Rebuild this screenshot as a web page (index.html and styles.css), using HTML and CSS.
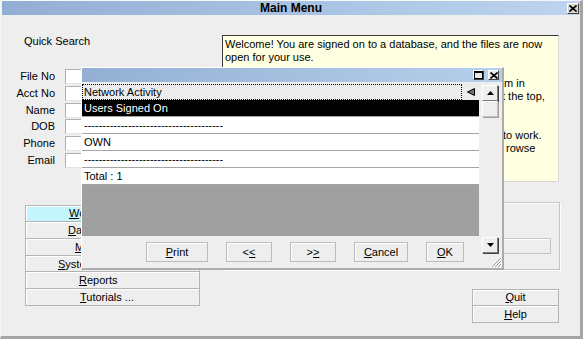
FILE: index.html
```html
<!DOCTYPE html>
<html>
<head>
<meta charset="utf-8">
<title>Main Menu</title>
<link rel="stylesheet" href="styles.css">
</head>
<body>
<div class="window">
  <div class="titlebar">
    <span class="title">Main Menu</span>
    <span class="tclose"><svg width="8" height="7" viewBox="0 0 8 7"><path d="M0.5 0.5 L7.5 6.5 M7.5 0.5 L0.5 6.5" stroke="#000" stroke-width="1.6" fill="none"/></svg></span>
  </div>
  <div class="body">
    <div class="left">
      <div class="qs">Quick Search</div>
      <div class="form">
        <span class="lbl">File No</span><span class="inp"></span>
        <span class="lbl">Acct No</span><span class="inp"></span>
        <span class="lbl">Name</span><span class="inp"></span>
        <span class="lbl">DOB</span><span class="inp"></span>
        <span class="lbl">Phone</span><span class="inp"></span>
        <span class="lbl">Email</span><span class="inp"></span>
      </div>
      <div class="nav">
        <div class="nbtn active i-w"><u>W</u>ork Area</div>
        <div class="nbtn i-d"><u>D</u>ata Entry</div>
        <div class="nbtn i-m"><u>M</u>aintenance</div>
        <div class="nbtn i-s"><u>S</u>ystem Utilities</div>
        <div class="nbtn i-r"><u>R</u>eports</div>
        <div class="nbtn i-t"><u>T</u>utorials ...</div>
      </div>
    </div>
    <div class="right">
      <div class="info">
        <div class="ln">Welcome! You are signed on to a database, and the files are now</div>
        <div class="ln">open for your use.</div>
        <div class="ln"></div>
        <div class="ln"><span class="lead l4">To get started, pick a program from the menu, or open a for</span>m in</div>
        <div class="ln"><span class="lead l5">the list. Your signon name is shown in the title bar a</span>t the top,</div>
        <div class="ln">along with the current database.</div>
        <div class="ln"></div>
        <div class="ln"><span class="lead l8">Use the buttons on the left to choose where you want </span>to work.</div>
        <div class="ln"><span class="lead l9">You can also use Quick Search to find a record or b</span>rowse</div>
      </div>
      <div class="group"><div class="gfield"></div></div>
      <div class="qh">
        <div class="nbtn"><u>Q</u>uit</div>
        <div class="nbtn"><u>H</u>elp</div>
      </div>
    </div>
  </div>

  <div class="popup">
    <div class="ptitle">
      <span class="pbtn"><svg width="9" height="8" viewBox="0 0 9 8"><rect x="0.5" y="0.5" width="8" height="7" fill="none" stroke="#000"/><rect x="0" y="0" width="9" height="2" fill="#000"/></svg></span>
      <span class="pbtn"><svg width="8" height="7" viewBox="0 0 8 7"><path d="M0.5 0.5 L7.5 6.5 M7.5 0.5 L0.5 6.5" stroke="#000" stroke-width="1.6" fill="none"/></svg></span>
    </div>
    <div class="pbody">
      <div class="plist">
        <div class="hdr">
          <span class="hdr-text">Network Activity</span>
          <span class="hdr-arrow"><svg width="8" height="8" viewBox="0 0 8 8"><polygon points="7.5,0.5 7.5,7.5 0.5,4" fill="#707070" stroke="#000" stroke-width="1"/></svg></span>
        </div>
        <div class="row sel">Users Signed On</div>
        <div class="row">--------------------------------------</div>
        <div class="row">OWN</div>
        <div class="row">--------------------------------------</div>
        <div class="row">Total : 1</div>
        <div class="fill"></div>
        <div class="bar">
          <div class="pb w-print"><u>P</u>rint</div>
          <div class="pb w-prev">&lt;<u>&lt;</u></div>
          <div class="pb w-next">&gt;<u>&gt;</u></div>
          <div class="pb w-cancel"><u>C</u>ancel</div>
          <div class="pb w-ok"><u>O</u>K</div>
        </div>
      </div>
      <div class="pscroll">
        <div class="sbtn"><svg width="7" height="4" viewBox="0 0 7 4"><polygon points="0,4 7,4 3.5,0" fill="#000"/></svg></div>
        <div class="sbtn thumb"></div>
        <div class="sspace"></div>
        <div class="sbtn"><svg width="7" height="4" viewBox="0 0 7 4"><polygon points="0,0 7,0 3.5,4" fill="#000"/></svg></div>
        <div class="grip"><svg width="12" height="12" viewBox="0 0 12 12"><path d="M11 2 L2 11 M11 5 L5 11 M11 8 L8 11" stroke="#9a9a9a" stroke-width="1" fill="none"/><path d="M12 3 L3 12 M12 6 L6 12 M12 9 L9 12" stroke="#ffffff" stroke-width="1" fill="none"/></svg></div>
      </div>
    </div>
  </div>
</div>
</body>
</html>
```

FILE: styles.css
```css
* { box-sizing: border-box; }

body {
  margin: 0;
  font-family: "Liberation Sans", Arial, sans-serif;
  font-size: 11px;
  color: #000;
  background: #eeeeee;
}

.window {
  position: relative;
  width: 583px;
  height: 339px;
  border-style: solid;
  border-width: 1px 3px 3px 1px;
  border-color: #f8f8f8 #a4a4a4 #a4a4a4 #f8f8f8;
  background: #eeeeee;
  overflow: hidden;
}

/* ---------- main title bar ---------- */
.titlebar {
  height: 14px;
  margin-left: 1px;
  display: grid;
  background: linear-gradient(to right, #92afd3, #bcd4ef);
}
.title, .tclose { grid-area: 1 / 1; }
.title {
  text-align: center;
  font-weight: bold;
  font-size: 12px;
  line-height: 14px;
}
.tclose {
  justify-self: end;
  align-self: start;
  margin-top: 2px;
  margin-right: 1px;
  width: 12px;
  height: 11px;
  display: flex;
  align-items: center;
  justify-content: center;
  background: #d8d6d0;
  border-style: solid;
  border-width: 1px;
  border-color: #fff #404040 #404040 #fff;
}

/* ---------- body ---------- */
.body {
  display: flex;
  padding-top: 20px;
}

.left {
  width: 199px;
  display: flex;
  flex-direction: column;
}
.qs {
  margin-left: 23px;
  line-height: 13px;
  height: 13px;
}
.form {
  margin-top: 21px;
  display: grid;
  grid-template-columns: 54px 135px;
  grid-auto-rows: 15px;
  column-gap: 10px;
  row-gap: 1.8px;
}
.lbl {
  text-align: right;
  line-height: 15px;
}
.inp {
  background: #fff;
  border-style: solid;
  border-width: 1px;
  border-color: #b0b0b0 #e4e4e4 #e4e4e4 #b0b0b0;
}

.nav {
  margin-top: 37px;
  margin-left: 24px;
  width: 175px;
  display: flex;
  flex-direction: column;
}
.nbtn {
  height: 17px;
  line-height: 15px;
  white-space: nowrap;
  overflow: hidden;
  background: #eeeeee;
  border: 1px solid #b4b4b4;
  box-shadow: inset 1px 1px 0 #ffffff;
  text-align: center;
}
.nbtn + .nbtn { border-top: 0; height: 16.8px; line-height: 16px; }
.nav .nbtn { text-align: left; }
.nbtn.active { background: #c2f6fc; }
.i-w { padding-left: 43px; }
.i-d { padding-left: 42px; }
.i-m { padding-left: 49px; }
.i-s { padding-left: 32px; }
.i-r { padding-left: 53px; }
.i-t { padding-left: 54px; }

.right {
  margin-left: 22px;
  width: 338px;
  display: flex;
  flex-direction: column;
}
.info {
  width: 337px;
  height: 147px;
  background: #ffffe1;
  border-style: solid;
  border-width: 1px;
  border-color: #3c3c3c #d8d8d8 #d8d8d8 #3c3c3c;
  padding: 2px 2px 0 2px;
}
.ln {
  height: 13px;
  line-height: 13px;
  white-space: nowrap;
}
.lead {
  display: inline-block;
  vertical-align: top;
  overflow: hidden;
  white-space: nowrap;
}
.l4 { width: 279px; }
.l5 { width: 277px; }
.l8 { width: 278px; }
.l9 { width: 281px; }

.group {
  margin-top: 20px;
  height: 68px;
  border: 1px solid #c4c4c4;
  box-shadow: 1px 1px 0 #ffffff, inset 1px 1px 0 #ffffff;
  display: flex;
  justify-content: flex-end;
  align-items: flex-start;
}
.gfield {
  margin-top: 35px;
  margin-right: 8px;
  width: 200px;
  height: 16px;
  border: 1px solid #c4c4c4;
  box-shadow: inset 1px 1px 0 #ffffff;
}
.qh {
  margin-top: 19px;
  align-self: flex-end;
  margin-right: 1px;
  width: 87px;
  display: flex;
  flex-direction: column;
}

/* ---------- popup ---------- */
.popup {
  position: absolute;
  left: 80px;
  top: 66px;
  width: 423px;
  height: 203px;
  border-style: solid;
  border-width: 1px 2px 2px 1px;
  border-color: #ffffff #acacac #acacac #ffffff;
  background: #eeeeee;
  display: flex;
  flex-direction: column;
}
.ptitle {
  height: 14px;
  flex: none;
  background: linear-gradient(to right, #93b0d4, #b6cfea);
  display: flex;
  justify-content: flex-end;
  align-items: center;
  gap: 4px;
  padding-right: 3px;
}
.pbtn {
  width: 11px;
  height: 10px;
  display: flex;
  align-items: center;
  justify-content: center;
  background: #e8e8e8;
  border-style: solid;
  border-width: 1px;
  border-color: #fff #404040 #404040 #fff;
}
.pbody {
  flex: 1;
  display: flex;
}
.plist {
  width: 397px;
  display: flex;
  flex-direction: column;
}
.hdr {
  margin-top: 2px;
  height: 16px;
  display: flex;
  background: #ececec;
}
.hdr-text {
  width: 380px;
  border: 1px dotted #000;
  padding-left: 1px;
  line-height: 14px;
}
.hdr-arrow {
  flex: 1;
  display: flex;
  align-items: center;
  padding-left: 5px;
}
.row {
  height: 17px;
  line-height: 16px;
  padding-left: 2px;
  background: #ffffff;
  border-bottom: 1px solid #a4a4a4;
  white-space: nowrap;
}
.row.sel {
  background: #000;
  color: #fff;
}
.fill {
  flex: 1;
  background: #a0a0a0;
}
.bar {
  height: 32px;
  flex: none;
  display: flex;
  align-items: flex-start;
  padding-top: 6px;
  padding-left: 64px;
  gap: 18px;
}
.pb {
  height: 20px;
  line-height: 18px;
  text-align: center;
  background: #eeeeee;
  border: 1px solid #bcbcbc;
  box-shadow: inset 1px 1px 0 #ffffff;
}
.w-print { width: 62px; }
.w-prev { width: 46px; }
.w-next { width: 46px; }
.w-cancel { width: 54px; }
.w-ok { width: 38px; }

.pscroll {
  flex: 1;
  display: flex;
  flex-direction: column;
  padding-top: 3px;
  padding-left: 3px;
}
.sbtn {
  width: 16px;
  height: 16px;
  flex: none;
  display: flex;
  align-items: center;
  justify-content: center;
  background: #eeeeee;
  border-style: solid;
  border-width: 1px;
  border-color: #ffffff #7c7c7c #7c7c7c #ffffff;
  box-shadow: 1px 1px 0 #404040;
}
.thumb { box-shadow: 1px 1px 0 #a0a0a0; border-color: #ffffff #c0c0c0 #c0c0c0 #ffffff; }
.sspace { flex: 1; }
.grip {
  height: 15px;
  display: flex;
  justify-content: flex-end;
  align-items: flex-end;
}
```
